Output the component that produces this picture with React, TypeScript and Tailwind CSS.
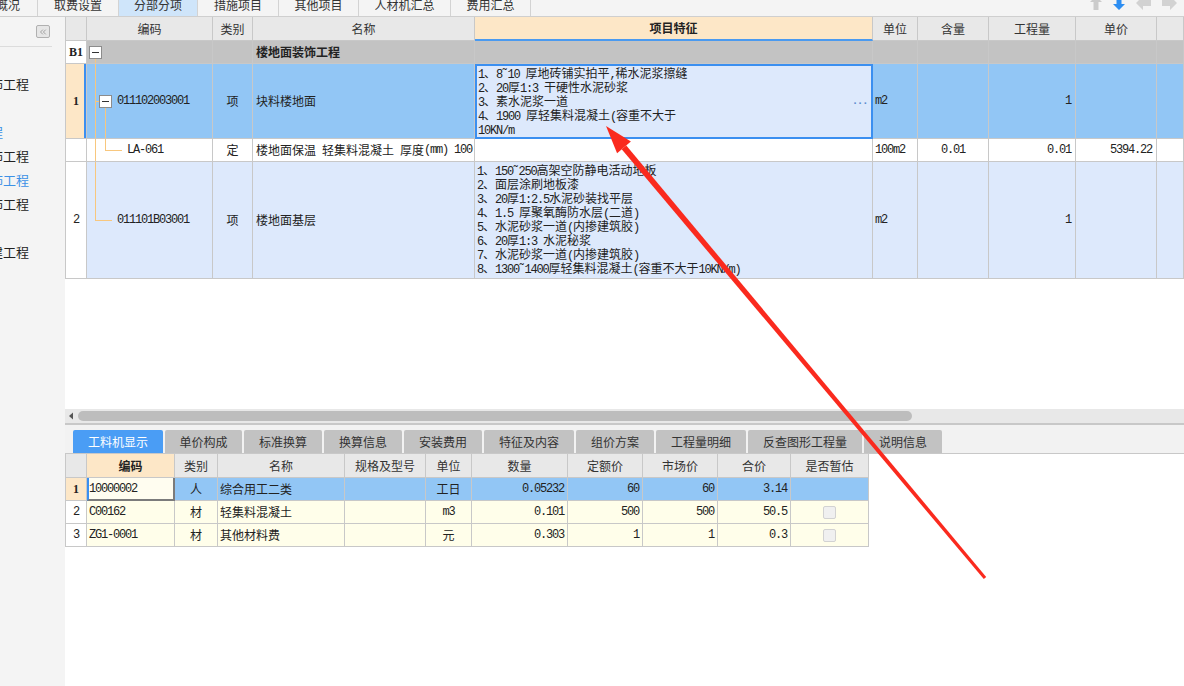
import type { ReactNode } from 'react'
import { ChevronsLeft } from 'lucide-react'

const MONO = "font-['Liberation_Mono',monospace] text-[12px] tracking-[-1.2px]"
const MAIN_COLS = 'grid grid-cols-[22px_126px_40px_222px_398px_45px_71px_87px_81px_27px]'
const SUB_COLS = 'grid grid-cols-[22px_88px_43px_127px_81px_46px_96px_75px_75px_73px_78px] w-[804px]'

// SimSun-like mix: CJK full width, ascii half width
function M({ t }: { t: string }) {
  const parts = t.split(/([\x20-\x7e]+)/)
  return (
    <>
      {parts.map((p, i) =>
        i % 2 ? (
          <span key={i} className={MONO}>
            {p}
          </span>
        ) : (
          p
        )
      )}
    </>
  )
}

function Td({ className = '', children }: { className?: string; children?: ReactNode }) {
  return (
    <div className={`border-r border-b border-[#c8c8c8] flex items-center overflow-hidden whitespace-pre ${className}`}>
      {children}
    </div>
  )
}

function Box({ className = '' }: { className?: string }) {
  return (
    <span className={`absolute w-[13px] h-[13px] border border-[#8c8c8c] bg-white flex items-center justify-center ${className}`}>
      <span className="w-[7px] h-px bg-[#333]" />
    </span>
  )
}

const topTabs = [
  { label: '概况', cls: 'w-[38px] justify-end pr-[17px]' },
  { label: '取费设置', cls: 'w-[81px] justify-center' },
  { label: '分部分项', cls: 'w-[79px] justify-center bg-[#cfe5fa] text-[#72b2f0]' },
  { label: '措施项目', cls: 'w-[81px] justify-center' },
  { label: '其他项目', cls: 'w-[80px] justify-center' },
  { label: '人材机汇总', cls: 'w-[92px] justify-center' },
  { label: '费用汇总', cls: 'w-[80px] justify-center' },
]

const sideItems = [
  { t: '饰工程', cls: '-ml-[10px] text-[#222]' },
  { t: '', cls: '' },
  { t: '程', cls: '-ml-[10px] text-[#3c91e6]' },
  { t: '饰工程', cls: '-ml-[10px] text-[#222]' },
  { t: '饰工程', cls: '-ml-[10px] text-[#3c91e6]' },
  { t: '饰工程', cls: '-ml-[10px] text-[#222]' },
  { t: '', cls: '' },
  { t: '建工程', cls: '-ml-[10px] text-[#222]' },
]

const subTabs = [
  { label: '工料机显示', cls: 'w-[90px] bg-[#4a9df5] text-white' },
  { label: '单价构成', cls: 'w-[77px] bg-[#c2c2c2] text-[#333]' },
  { label: '标准换算', cls: 'w-[78px] bg-[#c2c2c2] text-[#333]' },
  { label: '换算信息', cls: 'w-[78px] bg-[#c2c2c2] text-[#333]' },
  { label: '安装费用', cls: 'w-[78px] bg-[#c2c2c2] text-[#333]' },
  { label: '特征及内容', cls: 'w-[90px] bg-[#c2c2c2] text-[#333]' },
  { label: '组价方案', cls: 'w-[78px] bg-[#c2c2c2] text-[#333]' },
  { label: '工程量明细', cls: 'w-[90px] bg-[#c2c2c2] text-[#333]' },
  { label: '反查图形工程量', cls: 'w-[114px] bg-[#c2c2c2] text-[#333]' },
  { label: '说明信息', cls: 'w-[78px] bg-[#c2c2c2] text-[#333]' },
]

const feature1 = ['1、8˜10 厚地砖铺实拍平,稀水泥浆擦缝', '2、20厚1:3 干硬性水泥砂浆', '3、素水泥浆一道', '4、1900 厚轻集料混凝土(容重不大于', '10KN/m']

const feature2 = [
  '1、150˜250高架空防静电活动地板',
  '2、面层涂刷地板漆',
  '3、20厚1:2.5水泥砂装找平层',
  '4、1.5 厚聚氧酶防水层(二道)',
  '5、水泥砂浆一道(内掺建筑胶)',
  '6、20厚1:3 水泥秘浆',
  '7、水泥砂浆一道(内掺建筑胶)',
  '8、1300˜1400厚轻集料混凝土(容重不大于10KN/m)',
]

const materials = [
  { code: '10000002', kind: '人', name: '综合用工二类', unit: '工日', qty: '0.05232', quota: '60', market: '60', total: '3.14', check: false },
  { code: 'C00162', kind: '材', name: '轻集料混凝土', unit: 'm3', qty: '0.101', quota: '500', market: '500', total: '50.5', check: true },
  { code: 'ZG1-0001', kind: '材', name: '其他材料费', unit: '元', qty: '0.303', quota: '1', market: '1', total: '0.3', check: true },
]

const line = 'absolute bg-[#f8c77e]'

export default function App() {
  return (
    <div className="relative w-[1184px] h-[686px] overflow-hidden bg-white text-[12px] text-[#222] font-['Noto_Sans_CJK_SC','Noto_Sans',sans-serif]">
      {/* top tabs */}
      <div className="flex h-[17px] bg-[#f4f4f4] border-b border-[#cfcfcf] overflow-hidden">
        {topTabs.map((tab) => (
          <div key={tab.label} className={`flex border-r border-[#d3d3d3] text-[#333] overflow-hidden ${tab.cls}`}>
            <span className="block -mt-[2px] leading-[14px] whitespace-nowrap">{tab.label}</span>
          </div>
        ))}
        <div className="ml-auto flex gap-[11px] pr-[7px] -mt-[4px]">
          <svg width="12" height="14" viewBox="0 0 12 14">
            <polygon points="6,0 12,6 8.5,6 8.5,14 3.5,14 3.5,6 0,6" fill="#cbcbcb" />
          </svg>
          <svg width="12" height="14" viewBox="0 0 12 14">
            <polygon points="3.5,0 8.5,0 8.5,8 12,8 6,14 0,8 3.5,8" fill="#2d8ef2" />
          </svg>
          <svg width="15" height="14" viewBox="0 0 15 14">
            <polygon points="0,7 7,0 7,4 15,4 15,10 7,10 7,14" fill="#d2d2d2" />
          </svg>
          <svg width="15" height="14" viewBox="0 0 15 14">
            <polygon points="15,7 8,0 8,4 0,4 0,10 8,10 8,14" fill="#d2d2d2" />
          </svg>
        </div>
      </div>

      <div className="flex h-[669px]">
        {/* side tree */}
        <div className="w-[65px] shrink-0 bg-[#f4f4f4] overflow-hidden">
          <div className="pt-[8px] pl-[36px]">
            <div className="w-[14px] h-[13px] rounded-[2px] border border-[#b0b0b0] bg-[#e6e6e6] flex items-center justify-center">
              <ChevronsLeft size={10} strokeWidth={1.5} color="#777" />
            </div>
          </div>
          <div className="mt-[8px] h-px w-[52px] bg-[#dcdcdc]" />
          <div className="mt-[25px] flex flex-col">
            {sideItems.map((it, i) => (
              <div key={i} className="h-[24px] flex items-center text-[13px] whitespace-nowrap">
                <span className={it.cls}>{it.t}</span>
              </div>
            ))}
          </div>
        </div>

        <div className="flex-1 flex flex-col min-w-0">
          {/* main grid */}
          <div className="h-[392px] flex flex-col">
            <div className={`${MAIN_COLS} h-[24px] bg-[#e8e8e8] text-[#333]`}>
              <Td className="border-l" />
              <Td className="justify-center">编码</Td>
              <Td className="justify-center">类别</Td>
              <Td className="justify-center">名称</Td>
              <div className="border-r border-[#c8c8c8] border-b-2 border-b-[#4a9af0] bg-[#fde7c7] flex items-center justify-center font-bold text-[#222]">
                项目特征
              </div>
              <Td className="justify-center">单位</Td>
              <Td className="justify-center">含量</Td>
              <Td className="justify-center">工程量</Td>
              <Td className="justify-center">单价</Td>
              <Td />
            </div>

            {/* B1 */}
            <div className={`${MAIN_COLS} h-[23px]`}>
              <Td className="border-l bg-white justify-center">
                <span className="font-['Liberation_Serif',serif] font-bold">B1</span>
              </Td>
              <Td className="bg-[#c3c3c3] relative">
                <Box className="left-[2px] top-[5px]" />
                <span className={`${line} left-[8px] top-[18px] w-px h-[5px]`} />
              </Td>
              <Td className="bg-[#c3c3c3]" />
              <Td className="bg-[#c3c3c3] pl-[3px] font-bold">楼地面装饰工程</Td>
              <Td className="bg-[#c3c3c3]" />
              <Td className="bg-[#c3c3c3]" />
              <Td className="bg-[#c3c3c3]" />
              <Td className="bg-[#c3c3c3]" />
              <Td className="bg-[#c3c3c3]" />
              <Td className="bg-[#c3c3c3]" />
            </div>

            {/* row 1 */}
            <div className={`${MAIN_COLS} h-[75px]`}>
              <Td className="border-l bg-[#fde7c7] justify-center relative">
                <span className="font-['Liberation_Serif',serif] font-bold">1</span>
                <span className="absolute right-0 top-0 bottom-0 w-[2px] bg-[#3b8ff0]" />
              </Td>
              <Td className="bg-[#92c6f5] relative pl-[30px]">
                <span className={`${line} left-[8px] top-0 w-px h-full`} />
                <span className={`${line} left-[8px] top-[37px] w-[5px] h-px`} />
                <Box className="left-[12px] top-[31px]" />
                <span className={`${line} left-[18px] top-[44px] w-px h-[31px]`} />
                <M t="011102003001" />
              </Td>
              <Td className="bg-[#92c6f5] justify-center">项</Td>
              <Td className="bg-[#92c6f5] pl-[3px]">块料楼地面</Td>
              <div className="relative border-2 border-[#3b8ff0] bg-[#dde9fc] pl-px whitespace-pre overflow-hidden">
                {feature1.map((l) => (
                  <div key={l} className="h-[14px] leading-[14px]">
                    <M t={l} />
                  </div>
                ))}
                <span className="absolute right-[4px] top-[27px] text-[#5f8fd0] font-bold font-['Liberation_Mono',monospace] text-[11px] tracking-[-1.5px]">...</span>
              </div>
              <Td className="bg-[#92c6f5] pl-[2px]">
                <M t="m2" />
              </Td>
              <Td className="bg-[#92c6f5]" />
              <Td className="bg-[#92c6f5] justify-end pr-[4px]">
                <M t="1" />
              </Td>
              <Td className="bg-[#92c6f5]" />
              <Td className="bg-[#92c6f5]" />
            </div>

            {/* LA-061 */}
            <div className={`${MAIN_COLS} h-[23px]`}>
              <Td className="border-l bg-white" />
              <Td className="bg-white relative pl-[40px]">
                <span className={`${line} left-[8px] top-0 w-px h-full`} />
                <span className={`${line} left-[18px] top-0 w-px h-[11px]`} />
                <span className={`${line} left-[18px] top-[11px] w-[17px] h-px`} />
                <M t="LA-061" />
              </Td>
              <Td className="justify-center">定</Td>
              <Td className="pl-[3px]">
                <M t="楼地面保温 轻集料混凝土 厚度(mm) 100" />
              </Td>
              <Td />
              <Td className="pl-[2px]">
                <M t="100m2" />
              </Td>
              <Td className="justify-center">
                <M t="0.01" />
              </Td>
              <Td className="justify-end pr-[4px]">
                <M t="0.01" />
              </Td>
              <Td className="justify-end pr-[4px]">
                <M t="5394.22" />
              </Td>
              <Td />
            </div>

            {/* row 2 */}
            <div className={`${MAIN_COLS} h-[117px]`}>
              <Td className="border-l bg-white justify-center">
                <M t="2" />
              </Td>
              <Td className="bg-[#dde9fc] relative pl-[30px]">
                <span className={`${line} left-[8px] top-0 w-px h-[58px]`} />
                <span className={`${line} left-[8px] top-[58px] w-[17px] h-px`} />
                <M t="011101B03001" />
              </Td>
              <Td className="bg-[#dde9fc] justify-center">项</Td>
              <Td className="bg-[#dde9fc] pl-[3px]">楼地面基层</Td>
              <div className="border-r border-b border-[#c8c8c8] bg-[#dde9fc] pl-[2px] pt-px whitespace-pre overflow-hidden">
                {feature2.map((l) => (
                  <div key={l} className="h-[14px] leading-[14px]">
                    <M t={l} />
                  </div>
                ))}
              </div>
              <Td className="bg-[#dde9fc] pl-[2px]">
                <M t="m2" />
              </Td>
              <Td className="bg-[#dde9fc]" />
              <Td className="bg-[#dde9fc] justify-end pr-[4px]">
                <M t="1" />
              </Td>
              <Td className="bg-[#dde9fc]" />
              <Td className="bg-[#dde9fc]" />
            </div>
            <div className="flex-1 bg-white" />
          </div>

          {/* scrollbar */}
          <div className="h-[14px] bg-[#e8e8e8] flex items-center">
            <svg width="13" height="10" viewBox="0 0 13 10" className="shrink-0">
              <polygon points="4,5 8,1.5 8,8.5" fill="#555" />
            </svg>
            <div className="h-[10px] w-[834px] rounded-full bg-[#bdbdbd]" />
          </div>
          <div className="h-[2px] bg-[#c8c8c8]" />

          {/* bottom tabs */}
          <div className="h-[29px] bg-[#f2f2f2] border-b border-[#c8c8c8] flex items-end gap-[2px] pl-[8px]">
            {subTabs.map((tab) => (
              <div key={tab.label} className={`h-[23px] rounded-t-[2px] flex items-center justify-center text-[12px] ${tab.cls}`}>
                {tab.label}
              </div>
            ))}
          </div>

          {/* resource table */}
          <div className={`${SUB_COLS} h-[24px] bg-[#e8e8e8] text-[#333]`}>
            <Td className="border-l" />
            <Td className="justify-center bg-[#fde7c7] font-bold text-[#222]">编码</Td>
            <Td className="justify-center">类别</Td>
            <Td className="justify-center">名称</Td>
            <Td className="justify-center">规格及型号</Td>
            <Td className="justify-center">单位</Td>
            <Td className="justify-center">数量</Td>
            <Td className="justify-center">定额价</Td>
            <Td className="justify-center">市场价</Td>
            <Td className="justify-center">合价</Td>
            <Td className="justify-center">是否暂估</Td>
          </div>
          {materials.map((m, i) => {
            const bg = i === 0 ? 'bg-[#92c6f5]' : 'bg-[#fffeea]'
            return (
              <div key={m.code} className={`${SUB_COLS} h-[23px]`}>
                {i === 0 ? (
                  <Td className="border-l bg-[#fde7c7] justify-center">
                    <span className="font-['Liberation_Serif',serif] font-bold">1</span>
                  </Td>
                ) : (
                  <Td className="border-l bg-white justify-center">
                    <M t={String(i + 1)} />
                  </Td>
                )}
                {i === 0 ? (
                  <div className="border-l-2 border-l-[#3b8ff0] border-r-2 border-r-[#7b7b7b] border-b-2 border-b-[#7b7b7b] bg-[#fffdf0] flex items-center">
                    <M t={m.code} />
                  </div>
                ) : (
                  <Td className={`${bg} pl-[2px]`}>
                    <M t={m.code} />
                  </Td>
                )}
                <Td className={`${bg} justify-center`}>{m.kind}</Td>
                <Td className={`${bg} pl-[2px]`}>{m.name}</Td>
                <Td className={bg} />
                <Td className={`${bg} justify-center`}>
                  <M t={m.unit} />
                </Td>
                <Td className={`${bg} justify-end pr-[3px]`}>
                  <M t={m.qty} />
                </Td>
                <Td className={`${bg} justify-end pr-[3px]`}>
                  <M t={m.quota} />
                </Td>
                <Td className={`${bg} justify-end pr-[3px]`}>
                  <M t={m.market} />
                </Td>
                <Td className={`${bg} justify-end pr-[3px]`}>
                  <M t={m.total} />
                </Td>
                <Td className={`${bg} justify-center`}>
                  {m.check && <span className="w-[13px] h-[13px] rounded-[2px] border border-[#d2d2d2] bg-[#f0f0f0]" />}
                </Td>
              </div>
            )
          })}
          <div className="flex-1 bg-white" />
        </div>
      </div>

      {/* red annotation arrow */}
      <svg className="absolute left-0 top-0 pointer-events-none" width="1184" height="686">
        <polygon points="621.7,149.3 626.3,145.5 986.2,577 983.8,579" fill="#fa2a1e" />
        <polygon points="606,126 630.9,141.6 617.1,153.2" fill="#fa2a1e" />
      </svg>
    </div>
  )
}
